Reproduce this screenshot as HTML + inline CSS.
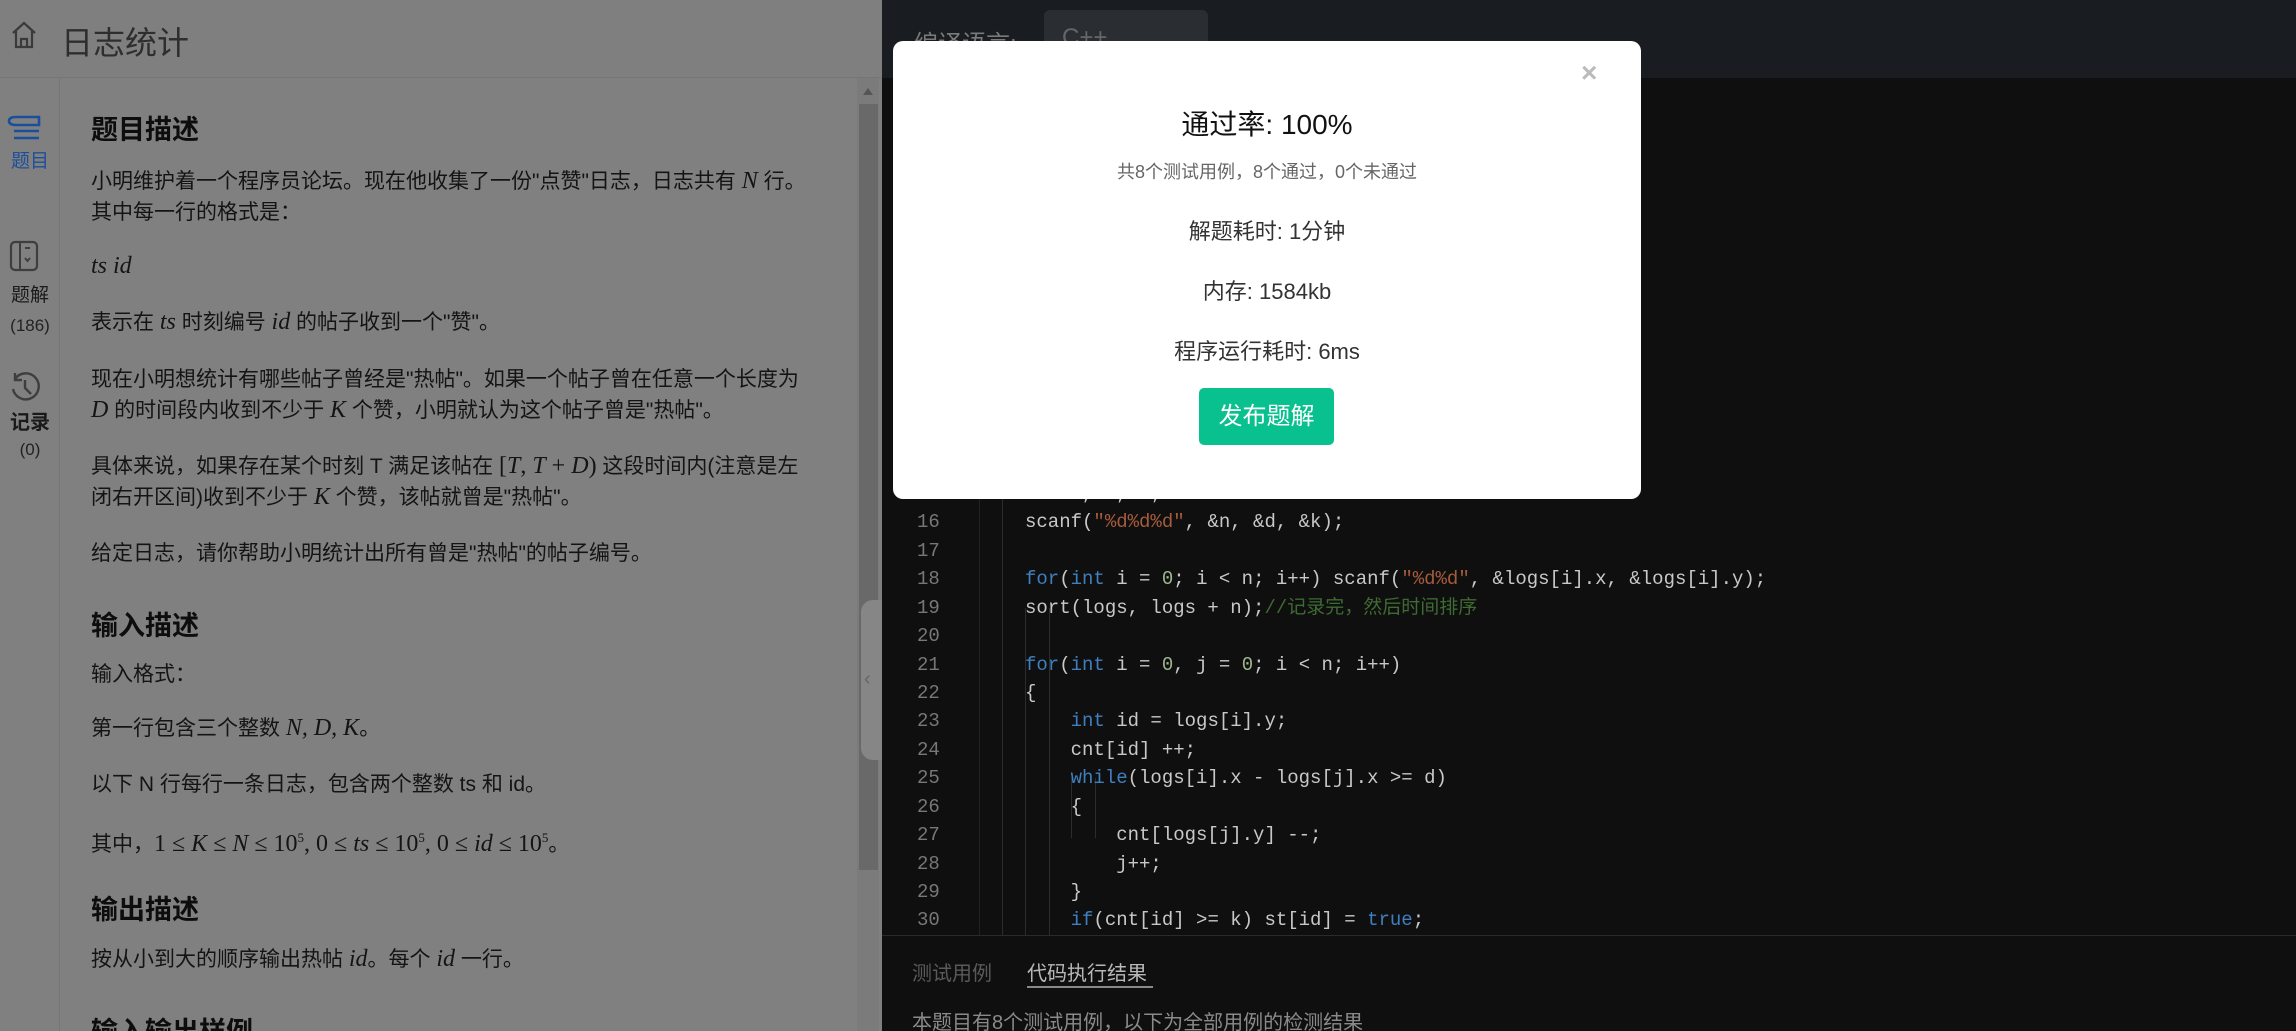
<!DOCTYPE html>
<html><head><meta charset="utf-8"><style>
*{margin:0;padding:0;box-sizing:border-box}
html{width:2296px;height:1031px;overflow:hidden}
body{width:2296px;height:1031px;overflow:hidden;position:relative;background:#0f0f0f;font-family:"Liberation Sans","Noto Sans CJK SC",sans-serif}
.abs{position:absolute}
#left{left:0;top:0;width:882px;height:1031px;background:#808080}
#lhead{left:0;top:0;width:882px;height:78px;border-bottom:1px solid #767676;background:#7f7f7f}
#side{left:0;top:78px;width:60px;height:953px;border-right:1px solid #767676}
.sl{position:absolute;left:0;width:60px;text-align:center;font-size:19px;color:#1a1a1a;white-space:nowrap}
.p{position:absolute;left:91px;font-size:21px;color:#141414;white-space:nowrap;line-height:31px}
.h{position:absolute;left:91px;font-size:27px;font-weight:bold;color:#0d0d0d;white-space:nowrap}
.m{font-family:"Liberation Serif",serif;font-style:italic;font-size:24px}
.mr{font-family:"Liberation Serif",serif;font-size:24px}
#rhead{left:882px;top:0;width:1414px;height:78px;background:#191c20}
.cl{position:absolute;left:0;height:28.43px;line-height:28.43px;font-family:"Liberation Mono","Noto Sans CJK SC",monospace;font-size:19px;color:#c8c8c8;white-space:pre;width:1400px}
.ln{position:absolute;left:35px;color:#777}
.k{color:#3f7fc0}.s{color:#a65b3c}.n{color:#9fb78f}.c{color:#3e6a33}
.code{position:absolute;left:143px}
.g{position:absolute;width:1px;background:#2c2c2c}
</style></head><body>
<div id="left" class="abs"></div>
<div id="lhead" class="abs">
<svg class="abs" style="left:10px;top:20px" width="28" height="30" viewBox="0 0 28 30"><path d="M3 13 L14 3 L25 13 M6 11 V27 H22 V11 M11 27 V19 H17 V27" fill="none" stroke="#3a3a3a" stroke-width="2.2"/></svg>
<div class="abs" style="left:61px;top:18px;font-size:32px;color:#2e2e2e">日志统计</div>
</div>
<div id="side" class="abs">
<svg class="abs" style="left:6px;top:37px" width="36" height="26" viewBox="0 0 36 26"><path d="M10 2 H33 V10 H10 Q3 10 3 6 Q3 2 10 2 Z M8 16 H33 M8 23 H33" fill="none" stroke="#1b4f9b" stroke-width="2.6"/></svg>
<div class="sl" style="top:68px;color:#1b4f9b">题目</div>
<svg class="abs" style="left:9px;top:162px" width="30" height="32" viewBox="0 0 30 32"><rect x="2" y="2" width="26" height="28" rx="4" fill="none" stroke="#3e3e3e" stroke-width="2.2"/><path d="M11 2 V30 M16 8 H21 M16 18 L18.5 21 L21 18" fill="none" stroke="#3e3e3e" stroke-width="2"/></svg>
<div class="sl" style="top:202px">题解</div>
<div class="sl" style="top:238px;font-size:17px;color:#222">(186)</div>
<svg class="abs" style="left:9px;top:292px" width="32" height="34" viewBox="0 0 32 34"><path d="M6 9 A13 13 0 1 1 4 19 M6 3 V10 H13 M16 10 V18 L22 24" fill="none" stroke="#3e3e3e" stroke-width="2.4"/></svg>
<div class="sl" style="top:328px;font-weight:bold;font-size:20px">记录</div>
<div class="sl" style="top:362px;font-size:17px;color:#222">(0)</div>
</div>
<div class="h" style="top:108px">题目描述</div>
<div class="p" style="top:166px">小明维护着一个程序员论坛。现在他收集了一份"点赞"日志，日志共有 <span class="m">N</span> 行。<br>其中每一行的格式是：</div>
<div class="p" style="top:251px"><span class="m">ts id</span></div>
<div class="p" style="top:307px">表示在 <span class="m">ts</span> 时刻编号 <span class="m">id</span> 的帖子收到一个"赞"。</div>
<div class="p" style="top:364px">现在小明想统计有哪些帖子曾经是"热帖"。如果一个帖子曾在任意一个长度为<br><span class="m">D</span> 的时间段内收到不少于 <span class="m">K</span> 个赞，小明就认为这个帖子曾是"热帖"。</div>
<div class="p" style="top:451px">具体来说，如果存在某个时刻 T 满足该帖在 <span class="mr">[<i>T</i>, <i>T</i> + <i>D</i>)</span> 这段时间内(注意是左<br>闭右开区间)收到不少于 <span class="m">K</span> 个赞，该帖就曾是"热帖"。</div>
<div class="p" style="top:538px">给定日志，请你帮助小明统计出所有曾是"热帖"的帖子编号。</div>
<div class="h" style="top:604px">输入描述</div>
<div class="p" style="top:659px">输入格式：</div>
<div class="p" style="top:713px">第一行包含三个整数 <span class="m">N, D, K</span>。</div>
<div class="p" style="top:769px">以下 N 行每行一条日志，包含两个整数 ts 和 id。</div>
<div class="p" style="top:822px">其中，<span class="mr">1 ≤ <i>K</i> ≤ <i>N</i> ≤ 10<sup style="font-size:13px">5</sup>, 0 ≤ <i>ts</i> ≤ 10<sup style="font-size:13px">5</sup>, 0 ≤ <i>id</i> ≤ 10<sup style="font-size:13px">5</sup></span>。</div>
<div class="h" style="top:888px">输出描述</div>
<div class="p" style="top:944px">按从小到大的顺序输出热帖 <span class="m">id</span>。每个 <span class="m">id</span> 一行。</div>
<div class="abs" style="left:0;top:1000px;width:857px;height:31px;overflow:hidden"><div class="h" style="top:10px">输入输出样例</div></div>
<!-- scrollbar -->
<div class="abs" style="left:857px;top:78px;width:22px;height:953px;background:#7b7b7b"></div>
<div class="abs" style="left:863px;top:88px;width:0;height:0;border-left:5px solid transparent;border-right:5px solid transparent;border-bottom:7px solid #555"></div>
<div class="abs" style="left:859px;top:104px;width:19px;height:766px;background:#696969"></div>
<div class="abs" style="left:861px;top:600px;width:21px;height:160px;background:#868686;border-radius:12px 0 0 12px"></div>
<div class="abs" style="left:864px;top:668px;font-size:20px;color:#666">‹</div>
<!-- right -->
<div id="rhead" class="abs">
<div class="abs" style="left:32px;top:24px;font-size:24px;color:#7a7a7a">编译语言:</div>
<div class="abs" style="left:162px;top:10px;width:164px;height:70px;background:#2a2e33;border-radius:6px"></div>
<div class="abs" style="left:180px;top:24px;font-size:24px;color:#666">C++</div>
</div>
<div class="abs" style="left:882px;top:78px;width:1414px;height:858px;overflow:hidden">
<div class="g" style="left:97px;top:0;height:858px;background:#222"></div>
<div class="g" style="left:120px;top:0;height:858px"></div>
<div class="g" style="left:143px;top:530px;height:328px"></div>
<div class="g" style="left:167px;top:530px;height:328px"></div>
<div class="g" style="left:189px;top:700px;height:60px"></div>
<div class="g" style="left:213px;top:700px;height:60px"></div>
<div style="position:absolute;left:0;top:402px;width:1414px">
<div class="cl" style="top:0"><span class="ln">15</span><span class="code">int n, d, k;</span></div>
<div class="cl" style="top:28.43px"><span class="ln">16</span><span class="code">scanf(<span class="s">"%d%d%d"</span>, &amp;n, &amp;d, &amp;k);</span></div>
<div class="cl" style="top:56.86px"><span class="ln">17</span></div>
<div class="cl" style="top:85.29px"><span class="ln">18</span><span class="code"><span class="k">for</span>(<span class="k">int</span> i = <span class="n">0</span>; i &lt; n; i++) scanf(<span class="s">"%d%d"</span>, &amp;logs[i].x, &amp;logs[i].y);</span></div>
<div class="cl" style="top:113.72px"><span class="ln">19</span><span class="code">sort(logs, logs + n);<span class="c">//记录完，然后时间排序</span></span></div>
<div class="cl" style="top:142.15px"><span class="ln">20</span></div>
<div class="cl" style="top:170.58px"><span class="ln">21</span><span class="code"><span class="k">for</span>(<span class="k">int</span> i = <span class="n">0</span>, j = <span class="n">0</span>; i &lt; n; i++)</span></div>
<div class="cl" style="top:199.01px"><span class="ln">22</span><span class="code">{</span></div>
<div class="cl" style="top:227.44px"><span class="ln">23</span><span class="code">    <span class="k">int</span> id = logs[i].y;</span></div>
<div class="cl" style="top:255.87px"><span class="ln">24</span><span class="code">    cnt[id] ++;</span></div>
<div class="cl" style="top:284.3px"><span class="ln">25</span><span class="code">    <span class="k">while</span>(logs[i].x - logs[j].x &gt;= d)</span></div>
<div class="cl" style="top:312.73px"><span class="ln">26</span><span class="code">    {</span></div>
<div class="cl" style="top:341.16px"><span class="ln">27</span><span class="code">        cnt[logs[j].y] --;</span></div>
<div class="cl" style="top:369.59px"><span class="ln">28</span><span class="code">        j++;</span></div>
<div class="cl" style="top:398.02px"><span class="ln">29</span><span class="code">    }</span></div>
<div class="cl" style="top:426.45px"><span class="ln">30</span><span class="code">    <span class="k">if</span>(cnt[id] &gt;= k) st[id] = <span class="k">true</span>;</span></div>
</div>
</div>
<div class="abs" style="left:882px;top:935px;width:1414px;height:1px;background:#2a2a2a"></div>
<div class="abs" style="left:912px;top:957px;font-size:20px;color:#5a5a5a">测试用例</div>
<div class="abs" style="left:1027px;top:957px;font-size:20px;color:#b8b8b8">代码执行结果</div>
<div class="abs" style="left:1027px;top:986px;width:126px;height:2px;background:#888"></div>
<div class="abs" style="left:912px;top:1006px;font-size:20px;color:#8a8a8a">本题目有8个测试用例，以下为全部用例的检测结果</div>
<!-- modal -->
<div class="abs" style="left:893px;top:41px;width:748px;height:458px;background:#fff;border-radius:10px">
<div class="abs" style="left:688px;top:16px;font-size:28px;color:#bbb;font-weight:bold">×</div>
<div class="abs" style="left:0;width:748px;top:62px;text-align:center;font-size:28px;color:#111">通过率: 100%</div>
<div class="abs" style="left:0;width:748px;top:117px;text-align:center;font-size:18px;color:#666">共8个测试用例，8个通过，0个未通过</div>
<div class="abs" style="left:0;width:748px;top:173px;text-align:center;font-size:22px;color:#333">解题耗时: 1分钟</div>
<div class="abs" style="left:0;width:748px;top:233px;text-align:center;font-size:22px;color:#333">内存: 1584kb</div>
<div class="abs" style="left:0;width:748px;top:293px;text-align:center;font-size:22px;color:#333">程序运行耗时: 6ms</div>
<div class="abs" style="left:306px;top:347px;width:135px;height:57px;background:#09c18e;border-radius:5px;color:#fff;font-size:24px;text-align:center;line-height:57px">发布题解</div>
</div>
</body></html>
